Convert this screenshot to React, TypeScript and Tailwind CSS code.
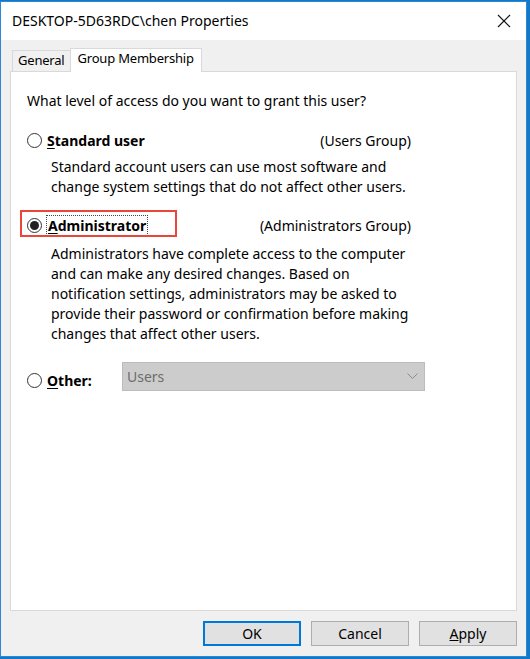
import React from "react";

function Radio({ checked }: { checked?: boolean }) {
  return (
    <span className="w-[15px] h-[15px] rounded-full border border-[#333333] bg-white flex items-center justify-center shrink-0">
      {checked && <span className="w-[9px] h-[9px] rounded-full bg-[#222222]" />}
    </span>
  );
}

export default function App() {
  const font = { fontFamily: '"Noto Sans", "Segoe UI", sans-serif' };
  return (
    <div className="w-[530px] h-[659px] bg-[#1478c8] pt-[1px]" style={font}>
      <div className="w-[527px] h-[656px] border border-[#2b88d8] bg-[#f0f0f0] flex flex-col text-black">
        {/* title bar */}
        <div className="h-[38px] bg-white flex items-center justify-between pl-[11px] pr-[14px] shrink-0">
          <span className="text-[14px] leading-none">DESKTOP-5D63RDC\chen Properties</span>
          <svg width="14" height="14" viewBox="0 0 14 14" className="mr-[1px]">
            <path d="M1 1 L13 13 M13 1 L1 13" stroke="#111" strokeWidth="1.1" />
          </svg>
        </div>
        {/* tabs */}
        <div className="flex items-end h-[31px] pl-[11px] shrink-0">
          <div className="h-[21px] pl-[5px] pr-[5px] border border-b-0 border-[#d9d9d9] bg-[#f0f0f0] text-[13px] tracking-[-0.2px] flex items-center">
            General
          </div>
          <div className="h-[24px] pl-[7px] pr-[7px] border border-b-0 border-[#d9d9d9] bg-white text-[13px] tracking-[-0.2px] flex items-center -ml-[1px] relative top-[1px] z-10 pb-[3px]">
            Group Membership
          </div>
        </div>
        {/* panel */}
        <div className="ml-[9px] w-[507px] h-[540px] border border-[#d9d9d9] bg-white shrink-0 text-[14px]">
          <div className="pl-[16px] pt-[18px]">
            <div className="h-[20px] flex items-center">What level of access do you want to grant this user?</div>

            <div className="mt-[20px] flex items-center h-[20px] w-[384px]">
              <Radio />
              <span className="ml-[5px] font-bold"><span className="underline underline-offset-2">S</span>tandard user</span>
              <span className="ml-auto">(Users Group)</span>
            </div>
            <div className="pl-[24px] mt-[7px] leading-[20px]">
              Standard account users can use most software and<br />
              change system settings that do not affect other users.
            </div>

            <div className="mt-[18px] flex items-center h-[20px] w-[384px] relative">
              <div className="absolute left-[-7px] top-[-5px] w-[157px] h-[27px] border-2 border-[#e8473a]" />
              <Radio checked />
              <span className="ml-[4px] font-bold border border-dotted border-[#444] px-[1px] leading-[19px]"><span className="underline underline-offset-2">A</span>dministrator</span>
              <span className="ml-auto">(Administrators Group)</span>
            </div>
            <div className="pl-[24px] mt-[9px] leading-[20px]">
              Administrators have complete access to the computer<br />
              and can make any desired changes. Based on<br />
              notification settings, administrators may be asked to<br />
              provide their password or confirmation before making<br />
              changes that affect other users.
            </div>

            <div className="mt-[18px] flex items-start">
              <div className="flex items-center h-[29px] mt-[4px]">
                <Radio />
                <span className="ml-[5px] font-bold w-[75px]"><span className="underline underline-offset-2">O</span>ther:</span>
              </div>
              <div className="w-[303px] h-[29px] bg-[#cccccc] border border-[#bcbcbc] flex items-center justify-between pl-[4px] pr-[6px]">
                <span className="text-[#6d6d6d]">Users</span>
                <svg width="11" height="7" viewBox="0 0 11 7">
                  <path d="M0.5 0.5 L5.5 5.5 L10.5 0.5" stroke="#8a8a8a" fill="none" strokeWidth="1" />
                </svg>
              </div>
            </div>
          </div>
        </div>
        {/* buttons */}
        <div className="flex justify-end gap-[10px] pr-[9px] mt-[10px] text-[14px]">
          <button className="w-[98px] h-[25px] bg-[#e1e1e1] border-2 border-[#0078d7]">OK</button>
          <button className="w-[98px] h-[25px] bg-[#e1e1e1] border border-[#adadad]">Cancel</button>
          <button className="w-[98px] h-[25px] bg-[#e1e1e1] border border-[#adadad]"><span className="underline">A</span>pply</button>
        </div>
      </div>
    </div>
  );
}
